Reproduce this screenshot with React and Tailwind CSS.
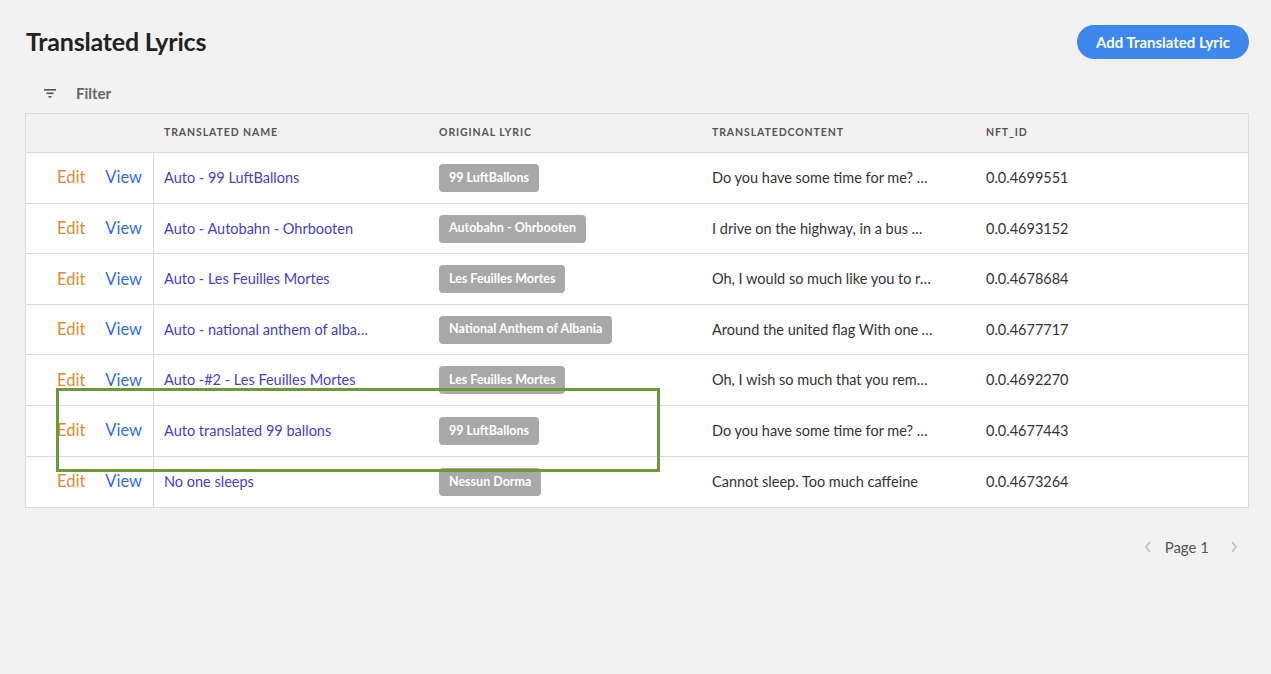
import React from "react";

const rows = [
  { name: "Auto - 99 LuftBallons", orig: "99 LuftBallons", content: "Do you have some time for me? Do you want to hear", nft: "0.0.4699551" },
  { name: "Auto - Autobahn - Ohrbooten", orig: "Autobahn - Ohrbooten", content: "I drive on the highway, in a bus with friends", nft: "0.0.4693152" },
  { name: "Auto - Les Feuilles Mortes", orig: "Les Feuilles Mortes", content: "Oh, I would so much like you to remember", nft: "0.0.4678684" },
  { name: "Auto - national anthem of albania", orig: "National Anthem of Albania", content: "Around the united flag With one wish", nft: "0.0.4677717" },
  { name: "Auto -#2 - Les Feuilles Mortes", orig: "Les Feuilles Mortes", content: "Oh, I wish so much that you remember", nft: "0.0.4692270" },
  { name: "Auto translated 99 ballons", orig: "99 LuftBallons", content: "Do you have some time for me? Do you want to hear", nft: "0.0.4677443" },
  { name: "No one sleeps", orig: "Nessun Dorma", content: "Cannot sleep. Too much caffeine", nft: "0.0.4673264" },
];

export default function App() {
  return (
    <div
      className="relative min-h-[674px] w-full bg-[#f2f2f2] pl-[25px] pr-[22px] pt-[25px] text-[#333]"
      style={{ fontFamily: "Lato, 'Open Sans', sans-serif" }}
    >
      <div className="flex h-[34px] items-center justify-between">
        <h1 className="pl-px text-[25px] font-bold tracking-[-0.2px] text-[#222]">Translated Lyrics</h1>
        <button className="h-[34px] w-[172px] rounded-full bg-[#3c88ec] text-[15px] font-bold text-white">
          Add Translated Lyric
        </button>
      </div>

      <div className="mb-[5px] mt-[19px] flex h-[30px] items-center pl-[18px]">
        <svg width="14" height="10" viewBox="0 0 14 10" className="mr-[19px]">
          <rect x="1" y="1" width="12" height="1.6" fill="#555" />
          <rect x="3.5" y="4.5" width="7" height="1.6" fill="#555" />
          <rect x="5.5" y="8" width="3" height="1.6" fill="#555" />
        </svg>
        <span className="text-[15px] font-bold text-[#666]">Filter</span>
      </div>

      <div className="border border-[#dcdcdc] bg-white">
        <div className="grid h-[39px] grid-cols-[128px_274px_273px_274px_1fr] items-center border-b border-[#dcdcdc] bg-[#f2f2f2] text-[10.5px] font-bold uppercase tracking-[0.9px] text-[#555]">
          <div></div>
          <div className="pl-[10px]">Translated Name</div>
          <div className="pl-[11px]">Original Lyric</div>
          <div className="pl-[11px]">TranslatedContent</div>
          <div className="pl-[11px]">NFT_ID</div>
        </div>
        {rows.map((r, i) => (
          <div
            key={i}
            className={`grid h-[50.6px] grid-cols-[128px_274px_273px_274px_1fr] items-center ${i < rows.length - 1 ? "border-b border-[#dcdcdc]" : ""}`}
          >
            <div className="flex h-full items-center border-r border-[#dcdcdc] pl-[31px] text-[16.5px]">
              <span className="text-[#e08a2c]">Edit</span>
              <span className="ml-[20px] text-[#2f6fe0]">View</span>
            </div>
            <div className="truncate pl-[10px] pr-[54px] text-[14.5px] text-[#3f3fcf]">{r.name}</div>
            <div className="pl-[11px]">
              <span className="inline-flex h-[28px] items-center rounded-[4px] bg-[#a8a8a8] px-[10px] text-[12.5px] font-bold text-white">
                {r.orig}
              </span>
            </div>
            <div className="truncate pl-[11px] pr-[42px] text-[14.5px] text-[#333]">{r.content}</div>
            <div className="pl-[11px] text-[14.5px] text-[#333]">{r.nft}</div>
          </div>
        ))}
      </div>

      <div className="mt-[28px] flex items-center justify-end pr-[10px] text-[15px] text-[#555]">
        <svg width="10" height="14" viewBox="0 0 10 14" className="mr-[12px]">
          <path d="M7 2 L3 7 L7 12" stroke="#bbb" strokeWidth="1.5" fill="none" />
        </svg>
        <span>Page 1</span>
        <svg width="10" height="14" viewBox="0 0 10 14" className="ml-[20px]">
          <path d="M3 2 L7 7 L3 12" stroke="#bbb" strokeWidth="1.5" fill="none" />
        </svg>
      </div>

      <div className="pointer-events-none absolute left-[56px] top-[388px] h-[84px] w-[604px] border-[3px] border-[#6a9a3a]"></div>
    </div>
  );
}
